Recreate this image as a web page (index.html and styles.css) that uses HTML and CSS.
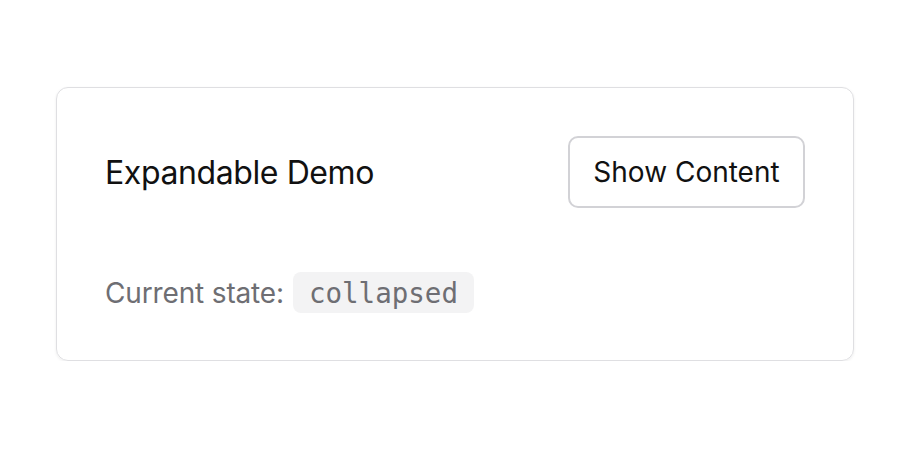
FILE: index.html
```html
<!DOCTYPE html>
<html>
<head>
<meta charset="utf-8">
<link rel="stylesheet" href="styles.css">
</head>
<body>
<div class="card">
  <div class="header">
    <h2 class="title">Expandable Demo</h2>
    <button class="btn">Show Content</button>
  </div>
  <div class="state">
    <span class="label">Current state:</span>
    <code class="chip">collapsed</code>
  </div>
</div>
</body>
</html>
```
FILE: styles.css
```css
html, body {
  margin: 0;
  background: #ffffff;
}
body {
  padding: 87px 0 0 56px;
  font-family: Inter, "Noto Sans", sans-serif;
  color: #111111;
}
.card {
  box-sizing: border-box;
  width: 798px;
  height: 274px;
  border: 1px solid #dfdfe2;
  border-radius: 12px;
  padding: 48px;
  box-shadow: 0 1px 3px rgba(0,0,0,0.07);
  display: flex;
  flex-direction: column;
}
.header {
  display: flex;
  align-items: center;
  justify-content: space-between;
  height: 72px;
}
.title {
  margin: 0;
  font-size: 32px;
  letter-spacing: -0.4px;
  font-weight: 400;
  color: #111111;
}
.btn {
  box-sizing: border-box;
  height: 72px;
  width: 237px;
  background: #ffffff;
  border: 2px solid #d2d2d6;
  border-radius: 10px;
  font-family: Inter, "Noto Sans", sans-serif;
  font-size: 28px;
  color: #111111;
  padding: 0;
}
.state {
  margin-top: 64px;
  display: flex;
  align-items: center;
  gap: 9px;
  font-size: 28px;
  letter-spacing: -0.15px;
  color: #6e6e73;
}
.chip {
  box-sizing: border-box;
  height: 41px;
  display: inline-flex;
  align-items: center;
  padding: 0 16px;
  background: #f3f3f4;
  border-radius: 8px;
  font-family: "DejaVu Sans Mono", monospace;
  font-size: 27.5px;
  letter-spacing: 0;
  color: #6e6e73;
}
```
